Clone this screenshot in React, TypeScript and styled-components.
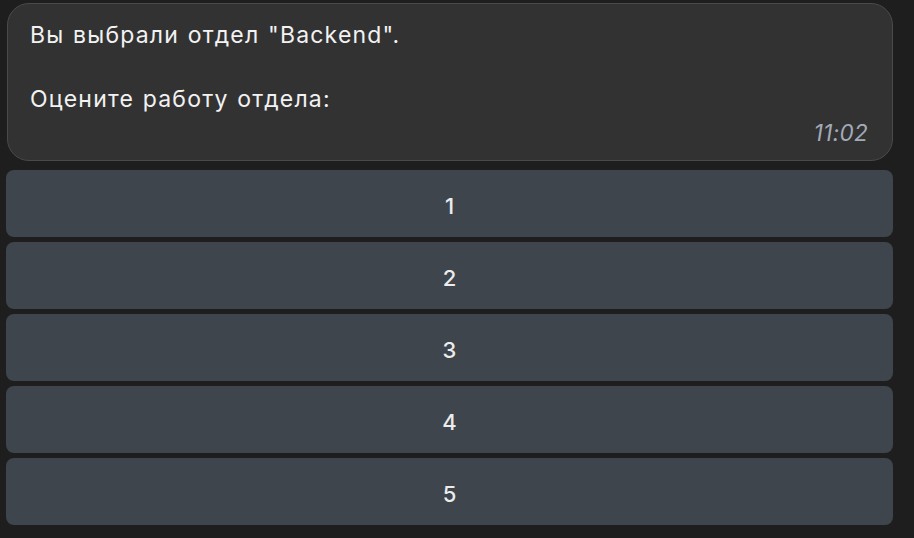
import React from "react";
import styled, { createGlobalStyle } from "styled-components";

const Global = createGlobalStyle`
  html, body {
    margin: 0;
    padding: 0;
    background: #1e1e1e;
  }
  body {
    font-family: Inter, "Noto Sans", "Liberation Sans", sans-serif;
    -webkit-font-smoothing: antialiased;
  }
`;

const Page = styled.div`
  width: 914px;
  height: 538px;
  box-sizing: border-box;
  padding: 3px 21px 0 6px;
  display: flex;
  flex-direction: column;
  background: #1e1e1e;
`;

const Bubble = styled.div`
  margin-left: 1px;
  box-sizing: border-box;
  background: #323232;
  border: 1px solid #4a4a4a;
  border-radius: 22px;
  padding: 15px 24px 14px 22px;
  display: flex;
  flex-direction: column;
`;

const MessageText = styled.div`
  color: #f2f2f2;
  font-size: 23px;
  letter-spacing: 1.2px;
  word-spacing: 1px;
  line-height: 32px;
  white-space: pre-wrap;
`;

const Time = styled.div`
  align-self: flex-end;
  margin-top: 5px;
  color: #a3abb8;
  font-size: 22.5px;
  font-style: italic;
  line-height: 26px;
  letter-spacing: 0.3px;
`;

const Keyboard = styled.div`
  margin-top: 9px;
  display: flex;
  flex-direction: column;
  gap: 5px;
`;

const KeyButton = styled.button`
  height: 67px;
  border: none;
  border-radius: 8px;
  background: #3e454c;
  color: #ececec;
  font-family: inherit;
  font-size: 22px;
  font-weight: 500;
  display: flex;
  align-items: center;
  justify-content: center;
  padding: 4px 0 0;
  cursor: pointer;
`;

export default function App() {
  return (
    <>
      <Global />
      <Page>
        <Bubble>
          <MessageText>{'Вы выбрали отдел "Backend".\n\nОцените работу отдела:'}</MessageText>
          <Time>11:02</Time>
        </Bubble>
        <Keyboard>
          {[1, 2, 3, 4, 5].map((n) => (
            <KeyButton key={n}>{n}</KeyButton>
          ))}
        </Keyboard>
      </Page>
    </>
  );
}
